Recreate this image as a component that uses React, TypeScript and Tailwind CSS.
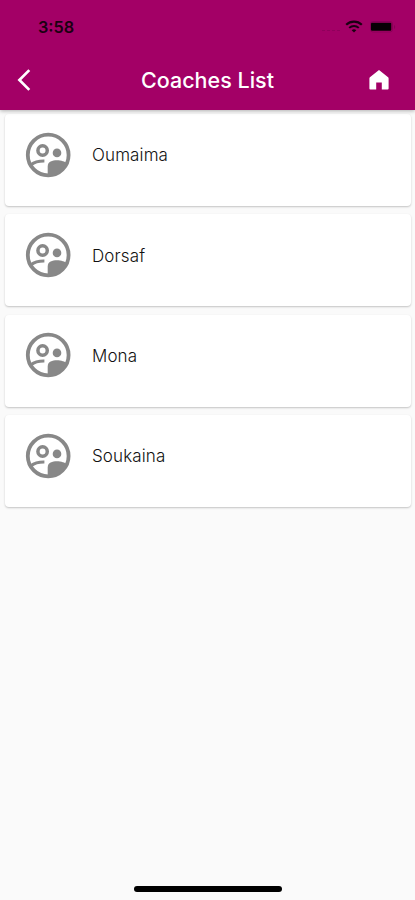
import { MdArrowBackIosNew } from "react-icons/md";

const coaches = ["Oumaima", "Dorsaf", "Mona", "Soukaina"];

function StatusBar() {
  return (
    <div className="flex h-[52px] items-center justify-between pl-[38px] pr-[19px] text-[#1b0012]">
      <span className="mt-px text-[16.3px] font-semibold leading-5">3:58</span>
      <div className="mt-px flex items-center">
        <div className="mr-[5px] mt-2 flex gap-[2px]">
          {[0, 1, 2, 3].map((dot) => (
            <span key={dot} className="h-px w-[3px] bg-[#8f005b]" />
          ))}
        </div>
        <svg className="mr-[7px] h-[13px] w-[18px]" viewBox="0 0 18 13" fill="none" stroke="currentColor">
          <path d="M1.2 4.8a11.2 11.2 0 0 1 15.6 0" strokeWidth="2.2" />
          <path d="M4.2 7.9a6.9 6.9 0 0 1 9.6 0" strokeWidth="2" />
          <path d="M9 12.6 6.7 10.3a3.3 3.3 0 0 1 4.6 0z" fill="currentColor" stroke="none" />
        </svg>
        <svg className="h-3 w-[26px]" viewBox="0 0 26 12">
          <rect x="0.5" y="0.5" width="22" height="10.5" rx="2.5" fill="none" stroke="#8a0058" />
          <rect x="1" y="1.8" width="20.3" height="8" rx="1" fill="#080005" />
          <path d="M24 4v4c1.6-.6 1.6-3.4 0-4z" fill="#8a0058" />
        </svg>
      </div>
    </div>
  );
}

function Header() {
  return (
    <header className="relative h-[109.5px] bg-[#a30066] shadow-[0_1px_4px_rgba(0,0,0,0.3)]">
      <StatusBar />
      <div className="grid h-14 grid-cols-[48px_1fr_48px] items-center text-white">
        <button className="flex justify-center">
          <MdArrowBackIosNew className="h-[26px] w-[26px]" />
        </button>
        <h1 className="text-center text-[21.5px] font-medium leading-7">Coaches List</h1>
        <button className="flex">
          <svg className="ml-[2px] h-5 w-5" viewBox="0 0 20 20" fill="currentColor">
            <path d="M10 0 .9 7.2Q.4 7.6.4 8.4V18.6q0 .9.9.9H7.2V12.4h5.6v7.1h5.9q.9 0 .9-.9V8.4q0-.8-.5-1.2z" />
          </svg>
        </button>
      </div>
    </header>
  );
}

function CoachIcon() {
  return (
    <svg className="h-[46px] w-[46px] shrink-0 text-[#888888]" viewBox="0 0 46 46" fill="none" stroke="currentColor">
      <circle cx="23.2" cy="23" r="20.4" strokeWidth="3.8" />
      <circle cx="17.6" cy="18.5" r="4.7" strokeWidth="3.5" />
      <circle cx="32" cy="20.9" r="4.3" fill="currentColor" stroke="none" />
      <path d="M6 32.8c3.2-2.6 7.6-3.9 13.4-3.8" strokeWidth="3.2" />
      <path
        d="M22.7 44V34.2c0-4.4 4.7-5.9 9.3-5.9 4 0 8.4 1.3 9.6 3.2C38.2 39 31.5 43.8 22.7 44z"
        fill="currentColor"
        stroke="none"
      />
    </svg>
  );
}

function CoachCard({ name }: { name: string }) {
  return (
    <li className="flex h-[92px] items-start rounded bg-white pl-5 pt-[17.9px] shadow-[0_1px_2px_rgba(0,0,0,0.22)]">
      <CoachIcon />
      <span className="ml-[21px] mt-[11.4px] text-[17px] font-light leading-6 tracking-[0.12px] text-[#111111]">{name}</span>
    </li>
  );
}

export default function App() {
  return (
    <div className="flex h-screen flex-col overflow-hidden bg-[#fafafa] font-['Inter',sans-serif]">
      <Header />
      <ul className="flex flex-col gap-[8.3px] pl-[5px] pr-1 pt-[4.5px]">
        {coaches.map((name) => (
          <CoachCard key={name} name={name} />
        ))}
      </ul>
      <div className="mx-auto mb-2 mt-auto h-[6px] w-[148px] rounded-full bg-black" />
    </div>
  );
}
